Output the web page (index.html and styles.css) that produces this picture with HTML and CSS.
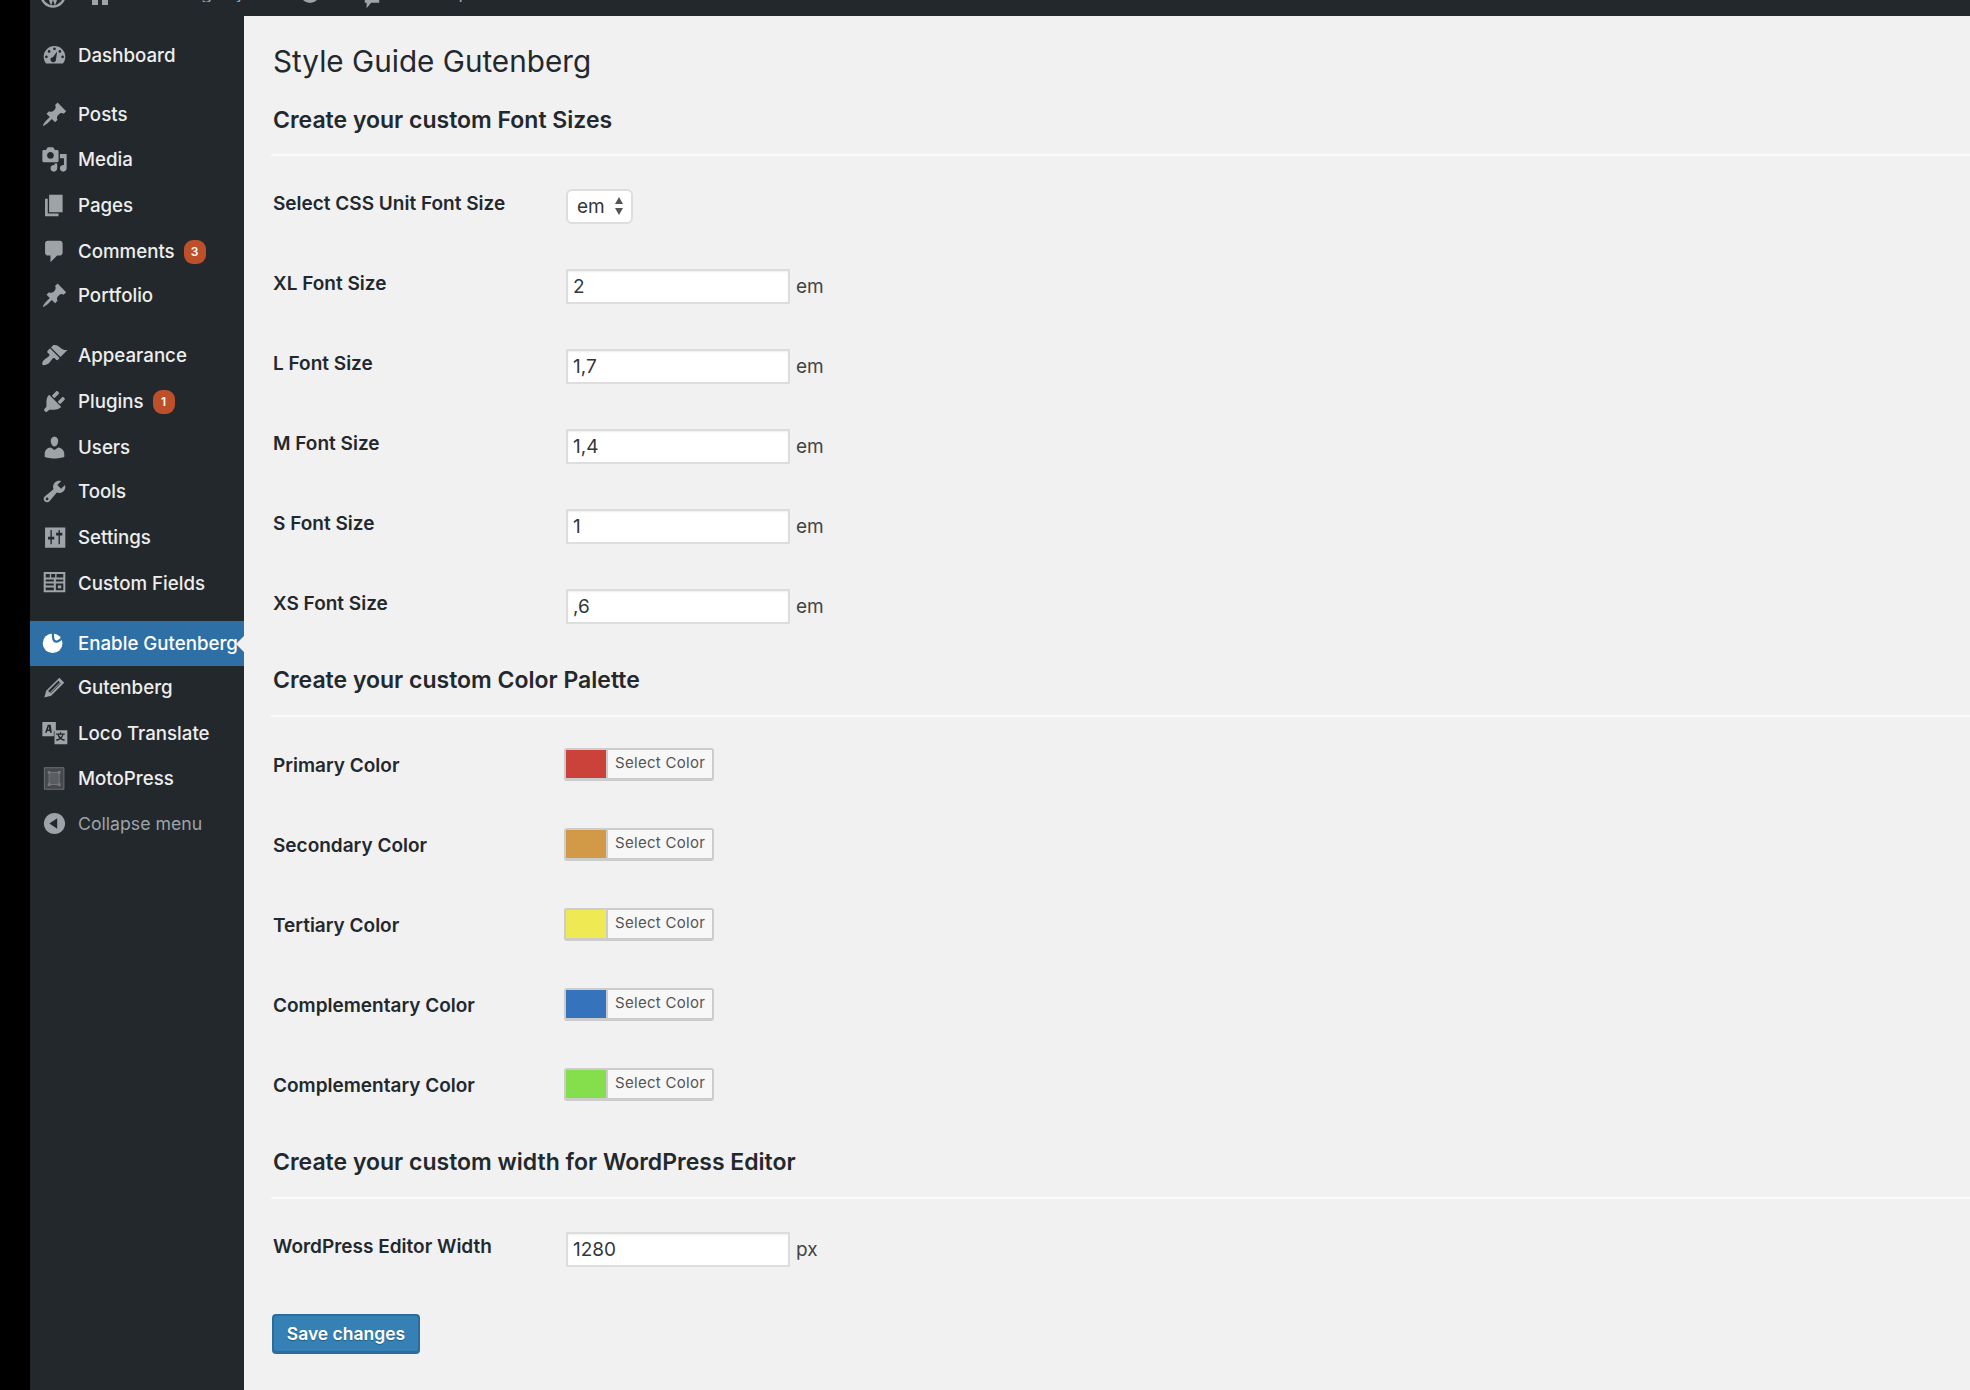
FILE: index.html
```html
<!DOCTYPE html>
<html lang="en">
<head>
    <meta charset="UTF-8" />
    <title>Style Guide Gutenberg</title>
    <link rel="stylesheet" href="styles.css">
</head>
<body>

    <div class="adminbar">
        <div class="adminbar-inner">
            <svg class="bar-logo" viewBox="0 0 26 26"><circle cx="13" cy="13" r="11.5"/><path d="M7 9l4 11 2-6 2 6 4-11"/></svg>
            <svg class="bar-home" viewBox="0 0 16 16"><path d="M0 0h16v16H10v-8H6v8H0z"/></svg>
            <span class="bar-text">Gutenberg Style Guide Test</span>
            <svg class="bar-circle" viewBox="0 0 20 20"><circle cx="10" cy="10" r="10"/></svg>
            <svg class="bar-bubble" viewBox="0 0 20 20"><path d="M2 0h16v12h-9l-5 6v-6H2z"/></svg>
            <span class="bar-text bar-new">+ New post</span>
        </div>
    </div>

    <div class="layout">
        <nav class="sidebar">
            <ul class="menu">
                <li class="item down">
                    <svg class="icon" viewBox="0 0 20 20"><path fill-rule="evenodd" d="M3.76 16h12.48c1.1-1.37 1.76-3.11 1.76-5 0-4.42-3.58-8-8-8s-8 3.58-8 8c0 1.89.66 3.63 1.76 5zM10 4c.55 0 1 .45 1 1s-.45 1-1 1-1-.45-1-1 .45-1 1-1zM6 6c.55 0 1 .45 1 1s-.45 1-1 1-1-.45-1-1 .45-1 1-1zm8 0c.55 0 1 .45 1 1s-.45 1-1 1-1-.45-1-1 .45-1 1-1zm-5.37 5.55L12 7l-1 6.5c-.2 1-1 1.5-2 1.5s-2-.9-2-2c0-.57.24-1.08.63-1.45zM4 10c.55 0 1 .45 1 1s-.45 1-1 1-1-.45-1-1 .45-1 1-1zm12 0c.55 0 1 .45 1 1s-.45 1-1 1-1-.45-1-1 .45-1 1-1z"/></svg>
                    Dashboard
                </li>
            </ul>
            <ul class="menu">
                <li class="item">
                    <svg class="icon" viewBox="0 0 20 20"><path d="M10.44 3.02l1.82-1.82 6.36 6.35-1.83 1.82c-1.05-.68-2.48-.57-3.41.36l-.75.75c-.92.93-1.04 2.35-.35 3.41l-1.83 1.82-2.41-2.41-2.8 2.79c-.42.42-3.38 2.71-3.8 2.29s1.86-3.39 2.28-3.81l2.79-2.79L4.1 9.36l1.83-1.82c1.05.69 2.48.57 3.4-.36l.75-.75c.93-.92 1.05-2.35.36-3.41z"/></svg>
                    Posts
                </li>
                <li class="item up">
                    <svg class="icon" viewBox="0 0 20 20"><path fill-rule="evenodd" d="M13 11V4c0-.55-.45-1-1-1h-1.67L9 1H5L3.67 3H2c-.55 0-1 .45-1 1v7c0 .55.45 1 1 1h10c.55 0 1-.45 1-1zM7 4.5c1.38 0 2.5 1.12 2.5 2.5S8.38 9.5 7 9.5 4.5 8.38 4.5 7 5.62 4.5 7 4.5zM14 6h5v10.5c0 1.38-1.12 2.5-2.5 2.5S14 17.88 14 16.5s1.12-2.5 2.5-2.5c.17 0 .34.02.5.05V9h-3V6zm-4 8.05V13h2v3.5c0 1.38-1.12 2.5-2.5 2.5S7 17.88 7 16.5 8.12 14 9.5 14c.17 0 .34.02.5.05z"/></svg>
                    Media
                </li>
                <li class="item">
                    <svg class="icon" viewBox="0 0 20 20"><path d="M6 15V2h10v13H6zm-1 1h8v2H3V5h2v11z"/></svg>
                    Pages
                </li>
                <li class="item down">
                    <svg class="icon" viewBox="0 0 20 20"><path d="M5 2h9c1.1 0 2 .9 2 2v7c0 1.1-.9 2-2 2h-2l-5 5v-5H5c-1.1 0-2-.9-2-2V4c0-1.1.9-2 2-2z"/></svg>
                    Comments <span class="badge">3</span>
                </li>
                <li class="item up">
                    <svg class="icon" viewBox="0 0 20 20"><path d="M10.44 3.02l1.82-1.82 6.36 6.35-1.83 1.82c-1.05-.68-2.48-.57-3.41.36l-.75.75c-.92.93-1.04 2.35-.35 3.41l-1.83 1.82-2.41-2.41-2.8 2.79c-.42.42-3.38 2.71-3.8 2.29s1.86-3.39 2.28-3.81l2.79-2.79L4.1 9.36l1.83-1.82c1.05.69 2.48.57 3.4-.36l.75-.75c.93-.92 1.05-2.35.36-3.41z"/></svg>
                    Portfolio
                </li>
            </ul>
            <ul class="menu">
                <li class="item up">
                    <svg class="icon" viewBox="0 0 20 20"><path d="M14.48 11.06L7.41 3.99l1.5-1.5c.5-.56 2.3-.47 3.51.32 1.21.8 1.43 1.28 2.91 2.1 1.18.64 2.45 1.26 4.45.85zm-.71.71L6.7 4.7 4.93 6.47c-.39.39-.39 1.02 0 1.41l1.06 1.06c.39.39.39 1.03 0 1.42-.6.6-1.43 1.11-2.21 1.69-.35.26-.7.53-1.01.84C1.43 13.23.4 16.1 1.2 16.9c.8.8 3.67-.23 5.01-1.57.31-.31.58-.66.85-1.02.57-.78 1.08-1.6 1.69-2.21.39-.39 1.02-.39 1.41 0l1.06 1.06c.39.39 1.02.39 1.41 0z"/></svg>
                    Appearance
                </li>
                <li class="item">
                    <svg class="icon" viewBox="0 0 20 20"><path d="M13.11 4.36L9.87 7.6 8 5.73l3.24-3.24c.35-.34 1.05-.2 1.56.32.52.51.66 1.21.31 1.55zm-8 1.77l.91-1.12 9.01 9.01-1.19.84c-.71.71-2.63 1.16-3.82 1.16H6.14L4.9 17.26c-.59.59-1.54.59-2.12 0-.59-.58-.59-1.53 0-2.12l1.24-1.24v-3.88c0-1.13.4-3.19 1.09-3.89zm7.26 3.97l3.24-3.24c.34-.35 1.04-.21 1.55.31.52.51.66 1.21.31 1.55l-3.24 3.25z"/></svg>
                    Plugins <span class="badge">1</span>
                </li>
                <li class="item">
                    <svg class="icon" viewBox="0 0 20 20"><path d="M10 9.25c-2.27 0-2.73-3.44-2.73-3.44C7 4.02 7.82 2 9.97 2c2.16 0 2.98 2.02 2.71 3.81 0 0-.41 3.44-2.68 3.44zm0 2.57L12.72 10c2.39 0 4.52 2.33 4.52 4.53v2.49s-3.65 1.13-7.24 1.13c-3.65 0-7.24-1.13-7.24-1.13v-2.49c0-2.25 1.94-4.48 4.47-4.48z"/></svg>
                    Users
                </li>
                <li class="item up">
                    <svg class="icon" viewBox="0 0 20 20"><path fill-rule="evenodd" d="M16.68 9.77c-1.34 1.34-3.3 1.67-4.95.99l-5.41 6.52c-.99.99-2.59.99-3.58 0s-.99-2.59 0-3.57l6.52-5.42c-.68-1.65-.35-3.61.99-4.95 1.28-1.28 3.12-1.62 4.72-1.06l-2.89 2.89 2.82 2.82 2.86-2.87c.53 1.58.18 3.39-1.08 4.65zM3.81 16.21c.4.39 1.04.39 1.43 0 .4-.4.4-1.04 0-1.43-.39-.4-1.03-.4-1.43 0-.39.39-.39 1.03 0 1.43z"/></svg>
                    Tools
                </li>
                <li class="item">
                    <svg class="icon" viewBox="0 0 20 20"><path fill-rule="evenodd" d="M3 2.500h15v15H3zM7 4.500v5H5.200v2H7v3.500h1V11.500h1.800v-2H8v-5zM13 4.500v2h-1.800v2H13v6.500h1V8.500h1.800v-2H14v-2z"/></svg>
                    Settings
                </li>
                <li class="item down">
                    <svg class="icon" viewBox="0 0 20 20"><path fill-rule="evenodd" d="M2 1.500h16v15H2zM3.500 3v2.500h3V3zM7.500 3v2.500h3V3zM11.500 3v2.500h5V3zM3.500 7v1.500h6V7zM3.500 10v1.500h6V10zM3.500 13v2h6v-2zM11 7v1.500h5.500V7zM11 10v5h5.500v-5zM12.500 11.500h2.500v2h-2.500z"/></svg>
                    Custom Fields
                </li>
            </ul>
            <ul class="menu">
                <li class="item current">
                    <svg class="icon" viewBox="0 0 20 20"><circle cx="8.600" cy="9.800" r="7.300"/><path class="leaf" d="M8.800 1.800C8.600 6 9.200 8.600 11.300 8.600C13.200 8.600 15 6.800 16.800 4.600"/></svg>
                    Enable Gutenberg
                    <span class="arrow"></span>
                </li>
                <li class="item up">
                    <svg class="icon" viewBox="0 0 20 20"><path fill-rule="evenodd" d="M13.600 2.800l3.600 3.600-9.700 9.700-5 1.300 1.300-5zM12.900 5l-7.600 7.600 1.100 1.100 7.600-7.600zM14.400 6.500l-7.600 7.600.3.300 7.600-7.600z"/></svg>
                    Gutenberg
                </li>
                <li class="item">
                    <svg class="icon" viewBox="0 0 20 20"><path fill-rule="evenodd" d="M1 1.500h10v7H9.500v3.500H1zM5 3.500L3 9.500h1.300l.4-1.300h1.800l.2 1.300H8L7.200 3.500zM5.100 7l.7-2.300.3 2.300z"/><path fill-rule="evenodd" d="M11 7.500h8.500V18H10v-8.500c0-1 .3-2 1-2zM14 9v1h-2.800v1h1c.3 1.100.8 1.900 1.400 2.500-.7.500-1.500.8-2.500 1l.4 1c1.200-.3 2.100-.7 2.900-1.300.8.600 1.700 1 2.900 1.300l.4-1c-1-.2-1.800-.5-2.500-1 .6-.6 1.100-1.400 1.400-2.500h1v-1H15V9zM13.300 11h2.400c-.2.700-.6 1.300-1.200 1.800-.5-.5-.9-1.100-1.200-1.800z"/></svg>
                    Loco Translate
                </li>
                <li class="item up">
                    <svg class="icon" viewBox="0 0 20 20"><path class="moto-back" d="M2.500 2h14.500v16H2.500z"/><path class="moto-frame" d="M6 5.500h7.500v9H6z"/><path class="moto-node" d="M5 4.500h2v2H5zM12.500 4.500h2v2h-2zM5 13.500h2v2H5zM12.500 13.500h2v2h-2z"/></svg>
                    MotoPress
                </li>
                <li class="item item-collapse up">
                    <svg class="icon" viewBox="0 0 20 20"><path fill-rule="evenodd" d="M10 2.160c4.330 0 7.840 3.510 7.840 7.840s-3.510 7.840-7.840 7.840S2.160 14.330 2.160 10 5.710 2.160 10 2.160zm2 11.720V6.120L6.180 9.970z"/></svg>
                    Collapse menu
                </li>
            </ul>
        </nav>

        <main class="content">
            <h1>Style Guide Gutenberg</h1>

            <h2 class="first">Create your custom Font Sizes</h2>
            <div class="sep first-sep"></div>
            <div class="rows">
                <div class="row">
                    <label>Select CSS Unit Font Size</label>
                    <div class="unit-select">em
                        <svg class="updown" viewBox="0 0 10 18"><path d="M5 0l4 7H1zM5 18l-4-7h8z"/></svg>
                    </div>
                </div>
                <div class="row">
                    <label>XL Font Size</label>
                    <input type="text" value="2"><span class="unit">em</span>
                </div>
                <div class="row">
                    <label>L Font Size</label>
                    <input type="text" value="1,7"><span class="unit">em</span>
                </div>
                <div class="row">
                    <label>M Font Size</label>
                    <input type="text" value="1,4"><span class="unit">em</span>
                </div>
                <div class="row">
                    <label>S Font Size</label>
                    <input type="text" value="1"><span class="unit">em</span>
                </div>
                <div class="row">
                    <label>XS Font Size</label>
                    <input type="text" value=",6"><span class="unit">em</span>
                </div>
            </div>

            <h2 class="second">Create your custom Color Palette</h2>
            <div class="sep"></div>
            <div class="rows colors">
                <div class="row">
                    <label>Primary Color</label>
                    <button class="color-btn"><span class="swatch primary"></span><span class="color-txt">Select Color</span></button>
                </div>
                <div class="row">
                    <label>Secondary Color</label>
                    <button class="color-btn"><span class="swatch secondary"></span><span class="color-txt">Select Color</span></button>
                </div>
                <div class="row">
                    <label>Tertiary Color</label>
                    <button class="color-btn"><span class="swatch tertiary"></span><span class="color-txt">Select Color</span></button>
                </div>
                <div class="row">
                    <label>Complementary Color</label>
                    <button class="color-btn"><span class="swatch comp-a"></span><span class="color-txt">Select Color</span></button>
                </div>
                <div class="row">
                    <label>Complementary Color</label>
                    <button class="color-btn"><span class="swatch comp-b"></span><span class="color-txt">Select Color</span></button>
                </div>
            </div>

            <h2 class="third">Create your custom width for WordPress Editor</h2>
            <div class="sep"></div>
            <div class="rows">
                <div class="row">
                    <label>WordPress Editor Width</label>
                    <input type="text" value="1280"><span class="unit">px</span>
                </div>
            </div>

            <button class="save">Save changes</button>
        </main>
    </div>

</body>
</html>
```

FILE: styles.css
```css
* {
    box-sizing: border-box;
}

body {
    margin: 0;
    height: 1390px;
    overflow: hidden;
    background: #000;
    padding-left: 30px;
    font-family: Inter, "Noto Sans", sans-serif;
    color: #23282d;
}

/* top bar, only its lower edge is in the picture */
.adminbar {
    height: 16px;
    overflow: hidden;
    background: #23282d;
}

.adminbar-inner {
    display: flex;
    align-items: flex-start;
    height: 20px;
    margin-top: -10px;
    color: #9ea3a8;
    font-size: 18px;
    line-height: 18px;
    white-space: nowrap;
}

.bar-logo {
    width: 26px;
    height: 26px;
    flex: none;
    margin: -8px 0 0 10px;
    fill: none;
    stroke: #9ea3a8;
    stroke-width: 2.5;
}

.bar-home {
    width: 16px;
    height: 16px;
    flex: none;
    margin: -1px 0 0 26px;
    fill: #9ea3a8;
}

.bar-text {
    width: 170px;
    flex: none;
    margin: -6px 0 0 14px;
    overflow: hidden;
}

.bar-circle {
    width: 20px;
    height: 20px;
    flex: none;
    margin: -7px 0 0 8px;
    fill: #9ea3a8;
}

.bar-bubble {
    width: 18px;
    height: 20px;
    flex: none;
    margin: 1px 0 0 43px;
    fill: #9ea3a8;
}

.bar-new {
    width: 120px;
    margin-left: 17px;
}

.layout {
    display: flex;
    height: 1374px;
}

/* left menu */
.sidebar {
    width: 214px;
    flex: none;
    background: #23282d;
    padding-top: 16px;
}

.menu {
    list-style: none;
    margin: 0 0 15px 0;
    padding: 0;
}

.item {
    position: relative;
    display: flex;
    align-items: center;
    height: 45.3px;
    padding-left: 11px;
    color: #eee;
    font-size: 18.7px;
    font-weight: 500;
    white-space: nowrap;
}

.up {
    padding-bottom: 2px;
}

.down {
    padding-top: 2px;
}

.icon {
    width: 27px;
    height: 27px;
    flex: none;
    margin-right: 10px;
    fill: #9ea3a8;
}

.moto-back {
    fill: #45484c;
    stroke: #777a7e;
    stroke-width: 0.6;
}

.moto-frame {
    fill: #5a5d61;
    stroke: #77797d;
    stroke-width: 0.7;
}

.moto-node {
    fill: #77797d;
}

.badge {
    display: inline-block;
    width: 22px;
    height: 24px;
    margin-left: 9px;
    border-radius: 9px;
    background: #bd4f2a;
    color: #fff;
    font-size: 12px;
    font-weight: 600;
    line-height: 24px;
    text-align: center;
}

.current {
    background: #2e70a6;
    color: #fff;
}

    .current .icon {
        fill: #fff;
    }

    .current .leaf {
        fill: none;
        stroke: #2e70a6;
        stroke-width: 1.6;
    }

.arrow {
    position: absolute;
    right: 0;
    top: 15px;
    border: 8px solid transparent;
    border-right-color: #f1f1f1;
    border-left: 0;
}

.item-collapse {
    color: #9ea3a8;
    font-size: 17.7px;
    font-weight: 400;
}

/* main area */
.content {
    flex: 1;
    background: #f1f1f1;
    padding: 27px 0 0 29px;
}

h1 {
    margin: 0;
    font-size: 29.7px;
    font-weight: 400;
    line-height: 36px;
}

h2 {
    margin: 0;
    font-size: 23px;
    font-weight: 600;
    line-height: 28px;
}

.first {
    margin-top: 27px;
}

.second {
    margin-top: 20px;
}

.third {
    margin-top: 24px;
}

.sep {
    height: 2px;
    margin: 21px 0 0 -2px;
    background: #fafafa;
}

.first-sep {
    margin-top: 20px;
}

.rows {
    padding-top: 10px;
}

.colors {
    padding-top: 7px;
}

.row {
    display: flex;
    align-items: center;
    height: 80px;
}

label {
    width: 293px;
    flex: none;
    padding-bottom: 6px;
    font-size: 19px;
    font-weight: 600;
}

.colors label {
    padding-top: 2px;
    padding-bottom: 0;
}

input {
    width: 224px;
    height: 35px;
    padding: 1px 5px 0;
    border: 2px solid #ddd;
    background: #fff;
    box-shadow: inset 0 1px 2px rgba(0,0,0,0.07);
    color: #32373c;
    font-family: inherit;
    font-size: 19px;
    outline: none;
}

.unit {
    margin-left: 6px;
    color: #444;
    font-size: 19px;
}

.unit-select {
    display: flex;
    align-items: center;
    justify-content: space-between;
    width: 67px;
    height: 35px;
    padding: 0 7px 0 9px;
    border: 2px solid #ddd;
    border-radius: 6px;
    background: #fff;
    color: #32373c;
    font-size: 19px;
}

.updown {
    width: 10px;
    height: 18px;
    fill: #555;
}

.color-btn {
    display: flex;
    width: 150px;
    height: 33px;
    margin-left: -2px;
    padding: 0;
    border: 2px solid #ccc;
    border-bottom-width: 3px;
    border-radius: 3px;
    background: #f7f7f7;
    font-family: inherit;
    cursor: pointer;
}

.swatch {
    display: block;
    width: 40px;
    height: 28px;
    border-right: 2px solid #ccc;
    box-sizing: content-box;
}

.color-txt {
    margin-left: 7px;
    color: #555;
    font-size: 15px;
    letter-spacing: 0.3px;
    line-height: 25px;
}

.primary { background: #cb423b; }
.secondary { background: #d29a47; }
.tertiary { background: #efea53; }
.comp-a { background: #3573bd; }
.comp-b { background: #85de4b; }

.save {
    display: block;
    width: 148px;
    height: 40px;
    margin: 25px 0 0 -1px;
    border: 2px solid #2b6c9c;
    border-bottom-width: 3px;
    border-radius: 4px;
    background: #3581b5;
    color: #fff;
    font-family: inherit;
    font-size: 17.5px;
    font-weight: 600;
    text-shadow: 0 1px 1px rgba(0,0,0,0.3);
    cursor: pointer;
}
```
